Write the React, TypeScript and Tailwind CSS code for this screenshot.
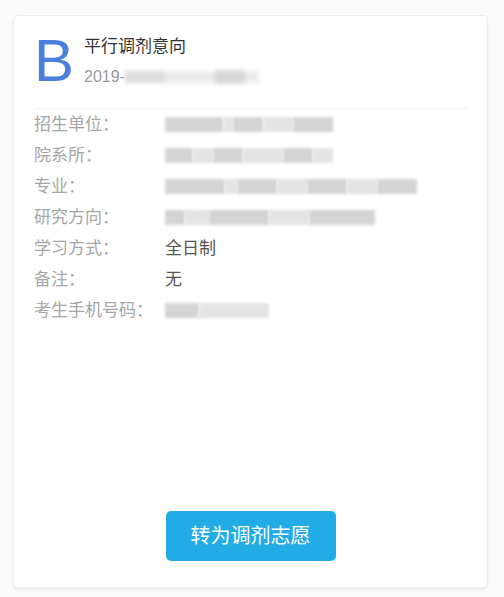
import React from 'react';

type Row = { label: string; value?: string; blur?: number[] };

const ROWS: Row[] = [
  { label: '招生单位：', blur: [58, 10, 30, 30, 40] },
  { label: '院系所：', blur: [28, 20, 30, 40, 30, 20] },
  { label: '专业：', blur: [60, 12, 40, 30, 40, 30, 40] },
  { label: '研究方向：', blur: [20, 24, 60, 40, 66] },
  { label: '学习方式：', value: '全日制' },
  { label: '备注：', value: '无' },
  { label: '考生手机号码：', blur: [34, 70] },
];

function Blurred({ widths }: { widths: number[] }) {
  return (
    <div className="flex h-[20px] items-center">
      {widths.map((w, i) => (
        <div
          key={i}
          className={i % 2 === 0 ? 'h-[15px] bg-[#d4d4d4] blur-[1.5px]' : 'h-[15px] bg-[#e4e4e4] blur-[1.5px]'}
          style={{ width: w }}
        />
      ))}
    </div>
  );
}

export default function App() {
  return (
    <div
      className="w-[504px] h-[597px] bg-[#fafafa] pt-[15px] px-[13px]"
      style={{ fontFamily: '"Liberation Sans", "Noto Sans CJK SC", sans-serif' }}
    >
      <div className="h-[573px] w-[475px] rounded-[5px] border border-[#ececec] bg-white shadow-[0_2px_3px_rgba(0,0,0,0.06)] flex flex-col">
        <div className="flex items-start px-[20px] pt-[10px]">
          <div className="text-[60px] leading-[70px] text-[#4a80dc] w-[50px]">B</div>
          <div className="pt-[10px]">
            <div className="text-[17px] leading-[22px] text-[#333]">平行调剂意向</div>
            <div className="mt-[9px] flex items-center text-[16px] leading-[20px] text-[#999]">
              2019-
              <div className="flex h-[15px] items-center blur-[2px]">
                <div className="h-[12px] w-[40px] bg-[#dcdcdc]" />
                <div className="h-[12px] w-[50px] bg-[#ececec]" />
                <div className="h-[14px] w-[30px] bg-[#d8d8d8]" />
                <div className="h-[12px] w-[14px] bg-[#ececec]" />
              </div>
            </div>
          </div>
        </div>
        <div className="mx-[20px] mt-[12px] h-px bg-[#f0f0f0]" />
        <div className="flex flex-col px-[20px]">
          {ROWS.map((r) => (
            <div key={r.label} className="flex h-[31px] items-center text-[17px]">
              <div className="w-[131px] text-[#a6a6a6]">{r.label}</div>
              {r.value ? (
                <div className="text-[#555]">{r.value}</div>
              ) : (
                <Blurred widths={r.blur ?? []} />
              )}
            </div>
          ))}
        </div>
        <div className="mt-auto mb-[26px] flex justify-center">
          <button className="h-[50px] w-[170px] rounded-[5px] bg-[#22ace6] text-[20px] text-white">
            转为调剂志愿
          </button>
        </div>
      </div>
    </div>
  );
}
